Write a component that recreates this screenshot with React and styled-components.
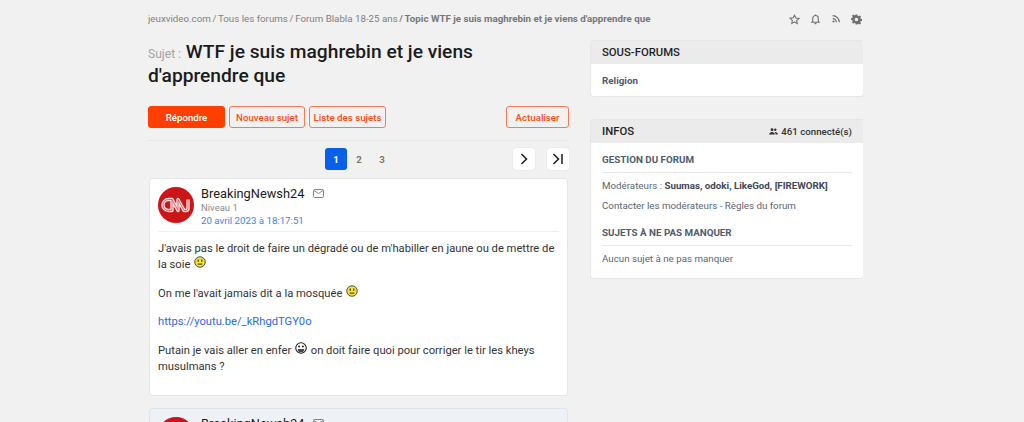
import React from "react";
import styled, { createGlobalStyle } from "styled-components";

const GlobalStyle = createGlobalStyle`
  html, body {
    margin: 0;
    height: 422px;
    overflow: hidden;
    background: #f1f1f1;
    font-family: Roboto, "Liberation Sans", sans-serif;
  }
`;

const Page = styled.div`
  width: 715px;
  margin-left: 148px;
  height: 422px;
  overflow: hidden;
`;
const TopBar = styled.div`
  display: flex;
  justify-content: space-between;
  align-items: center;
  height: 18px;
  padding-top: 9px;
  margin-bottom: 13px;
`;
const Breadcrumb = styled.div`
  font-size: 9.75px;
  color: #808080;
  white-space: nowrap;
`;
const Crumb = styled.span`
  font-weight: ${(p) => (p.$current ? 700 : 400)};
  color: ${(p) => (p.$current ? "#777" : "#808080")};
`;
const Sep = styled.span`
  margin: 0 -0.8px;
  font-weight: ${(p) => (p.$current ? 700 : 400)};
`;
const TopIcons = styled.div`
  display: flex;
  align-items: center;
  gap: 10px;
  padding: 2px 1px 0 0;
  color: #6f6f6f;
`;
const Columns = styled.div`
  display: grid;
  grid-template-columns: 421px 272px;
  column-gap: 22px;
  align-items: start;
`;
const MainCol = styled.main``;
const SideCol = styled.aside`
  display: flex;
  flex-direction: column;
  gap: 24px;
  padding-top: 1px;
`;
const Title = styled.h1`
  margin: 0 0 18px;
  font-size: 19.2px;
  line-height: 24px;
  font-weight: 500;
  color: #1b1b1b;
`;
const TitleLabel = styled.span`
  font-size: 12.1px;
  line-height: 1;
  font-weight: 400;
  color: #a3a3a3;
`;
const Actions = styled.div`
  display: flex;
  gap: 4px;
  padding-bottom: 12px;
  border-bottom: 1px solid #e6e6e6;
`;
const Button = styled.button`
  height: 22px;
  width: ${(p) => p.$w}px;
  padding: 0;
  border-radius: 3px;
  border: 1px solid ${(p) => (p.$primary ? "#ff3f00" : "#f57a55")};
  background: ${(p) => (p.$primary ? "#ff3f00" : "transparent")};
  color: ${(p) => (p.$primary ? "#fff" : "#ff4b12")};
  font: 500 9.7px Roboto, sans-serif;
  white-space: nowrap;
  margin-left: ${(p) => (p.$push ? "auto" : "0")};
`;
const Pager = styled.div`
  display: flex;
  height: 22px;
  margin: 7px 0 8px;
  padding-left: 177px;
`;
const PageNum = styled.div`
  width: 22px;
  height: 22px;
  margin-right: 1px;
  border-radius: 3px;
  display: flex;
  align-items: center;
  justify-content: center;
  font-size: 9.7px;
  font-weight: 700;
  background: ${(p) => (p.$active ? "#0760e8" : "transparent")};
  color: ${(p) => (p.$active ? "#fff" : "#777")};
`;
const PagerRight = styled.div`
  margin-left: auto;
  display: flex;
  gap: 12px;
`;
const PagerBtn = styled.div`
  width: 22px;
  height: 22px;
  border-radius: 3px;
  background: #fff;
  box-shadow: 0 0 1px rgba(0, 0, 0, 0.2);
  display: flex;
  align-items: center;
  justify-content: center;
  color: #1b1b1b;
`;
const Post = styled.article`
  box-sizing: border-box;
  margin: 0 1px 12px;
  padding: 8px 8px 0;
  border-radius: 3px;
  background: ${(p) => (p.$alt ? "#eef2f7" : "#fff")};
  border: 1px solid ${(p) => (p.$alt ? "#dfe5ee" : "#e6e6e6")};
  min-height: ${(p) => (p.$alt ? "100px" : "218px")};
`;
const PostHead = styled.div`
  box-sizing: border-box;
  display: flex;
  gap: 7px;
  border-bottom: 1px solid #f0f0f0;
  height: 45px;
`;
const Author = styled.div`
  display: flex;
  flex-direction: column;
`;
const AuthorName = styled.div`
  display: flex;
  align-items: center;
  gap: 9px;
  font-size: 12.8px;
  line-height: 13px;
  font-weight: 400;
  color: #1b1b1b;
`;
const Mail = styled.span`
  display: flex;
  color: #808080;
`;
const Level = styled.div`
  font-size: 9.5px;
  line-height: 13px;
  margin-top: 1px;
  color: #8b8b8b;
`;
const PostDate = styled.div`
  font-size: 9.7px;
  line-height: 13px;
  color: #3f7fe8;
`;
const PostBody = styled.div`
  padding-top: 8.5px;
  font-size: 11.2px;
  line-height: 16.5px;
  color: #333;
`;
const Para = styled.p`
  margin: 0 0 12px;
`;
const LinkText = styled.a`
  color: #2c68e8;
  text-decoration: none;
`;
const Smiley = styled.svg`
  vertical-align: 0;
  margin: -3px 1px 0;
`;
const Card = styled.section`
  background: #fff;
  border-radius: 3px;
  box-shadow: 0 0 0 1px #e6e6e6;
  overflow: hidden;
`;
const CardHead = styled.header`
  display: flex;
  justify-content: space-between;
  align-items: center;
  height: 23px;
  padding: 0 11px;
  background: #ebebeb;
`;
const CardTitle = styled.h2`
  margin: 0;
  font-size: 11.3px;
  font-weight: 500;
  color: #1f1f1f;
`;
const Online = styled.div`
  display: flex;
  align-items: center;
  gap: 3px;
  font-size: 9.7px;
  font-weight: 500;
  color: #333;
`;
const CardBody = styled.div`
  padding: ${(p) => p.$pad};
  font-size: 9.75px;
  color: #5c6470;
`;
const SubLink = styled.div`
  font-weight: 700;
  font-size: 9.8px;
  color: #4f5b6b;
  line-height: 13px;
`;
const SectionTitle = styled.h3`
  margin: 0 0 6px;
  padding-bottom: 6px;
  border-bottom: 1px solid #e8e8e8;
  font-size: 9.8px;
  line-height: 13px;
  font-weight: 700;
  color: #4f5b6b;
`;
const InfoLine = styled.div`
  line-height: 13px;
  margin-bottom: ${(p) => p.$mb}px;
`;
const Strong = styled.strong`
  color: #3f4855;
`;

function CnnLogo() {
  const letters = "M14.500 12.500H10.500A5.500 5.500 0 0 0 10.500 23.500H14V12.500L20 23.500V12.500L26 23.500H28A2 2 0 0 0 30 21.500V12.500";
  return (
    <svg width="36" height="36" viewBox="0 0 36 36" style={{ flexShrink: 0 }}>
      <circle cx="18" cy="18" r="18" fill="#cc1518" />
      <g fill="none" strokeLinejoin="round">
        <path d={letters} stroke="#f8e4e4" strokeWidth="3.400" />
        <path d={letters} stroke="#d2494b" strokeWidth="0.800" />
      </g>
    </svg>
  );
}

function Face({ kind }) {
  if (kind === "grin") {
    return (
      <Smiley width="12" height="12" viewBox="0 0 13 13">
        <circle cx="6.500" cy="6.500" r="5.700" fill="#fff" stroke="#222" strokeWidth="1.200" />
        <circle cx="4.500" cy="4.800" r="1.100" fill="#222" />
        <circle cx="8.500" cy="4.800" r="1.100" fill="#222" />
        <path d="M3 7.500h7a3.500 3.500 0 0 1-7 0z" fill="#444" />
      </Smiley>
    );
  }
  return (
    <Smiley width="12" height="12" viewBox="0 0 13 13">
      <circle cx="6.500" cy="6.500" r="5.700" fill="#f6e13a" stroke="#333" strokeWidth="0.900" />
      <rect x="4" y="3.800" width="1.200" height="2.400" fill="#222" />
      <rect x="7.800" y="3.800" width="1.200" height="2.400" fill="#222" />
      <path d="M4 8.800h5" stroke="#222" strokeWidth="1" />
    </Smiley>
  );
}

function PostHeader() {
  return (
    <PostHead>
      <CnnLogo />
      <Author>
        <AuthorName>
          BreakingNewsh24
          <Mail>
            <svg width="11" height="9" viewBox="0 0 11 9" fill="none" stroke="currentColor" strokeWidth="1">
              <rect x="0.500" y="0.500" width="10" height="8" rx="1" />
              <path d="M1 1.500l4.500 3 4.500-3" />
            </svg>
          </Mail>
        </AuthorName>
        <Level>Niveau 1</Level>
        <PostDate>20 avril 2023 à 18:17:51</PostDate>
      </Author>
    </PostHead>
  );
}

export default function App() {
  return (
    <>
      <GlobalStyle />
      <Page>
        <TopBar>
          <Breadcrumb>
            <Crumb>jeuxvideo.com</Crumb> <Sep>/</Sep> <Crumb>Tous les forums</Crumb> <Sep>/</Sep>{" "}
            <Crumb>Forum Blabla 18-25 ans</Crumb> <Sep $current>/</Sep>{" "}
            <Crumb $current>Topic WTF je suis maghrebin et je viens d'apprendre que</Crumb>
          </Breadcrumb>
          <TopIcons>
            <svg width="11" height="11" viewBox="0 0 24 24" fill="none" stroke="currentColor" strokeWidth="2.200">
              <path d="M12 2.500l2.900 6.300 6.900.8-5.100 4.700 1.400 6.800L12 17.200l-6.100 3.400 1.400-6.800-5.100-4.700 6.900-.8z" />
            </svg>
            <svg width="11" height="12" viewBox="0 0 24 24" fill="none" stroke="currentColor" strokeWidth="2.400">
              <path d="M6 17V10.500a6 6 0 0 1 12 0V17l2 2H4z" />
              <path d="M10 22h4M12 2v2" />
            </svg>
            <svg width="10" height="10" viewBox="0 0 24 24" fill="none" stroke="currentColor" strokeWidth="3">
              <path d="M4 4a16 16 0 0 1 16 16M4 11a9 9 0 0 1 9 9" />
              <circle cx="6" cy="18" r="2.600" fill="currentColor" stroke="none" />
            </svg>
            <svg width="11" height="11" viewBox="0 0 24 24" fill="currentColor">
              <path
                fillRule="evenodd"
                d="M10 1h4l.6 3.200 1.800.8L19.100 3l2.900 2.900-1.900 2.700.8 1.800 3.100.6v4l-3.100.6-.8 1.800 1.900 2.700-2.900 2.900-2.700-2-1.800.8L14 23h-4l-.6-3.200-1.800-.8-2.700 2L2 18.100l1.900-2.700-.8-1.800L0 13V9l3.100-.6.800-1.800L2 3.900 4.900 1l2.700 2 1.800-.8zM12 8a4 4 0 1 0 0 8 4 4 0 0 0 0-8z"
              />
            </svg>
          </TopIcons>
        </TopBar>
        <Columns>
          <MainCol>
            <Title>
              <TitleLabel>Sujet :</TitleLabel> WTF je suis maghrebin et je viens d'apprendre que
            </Title>
            <Actions>
              <Button $primary $w={77}>Répondre</Button>
              <Button $w={76}>Nouveau sujet</Button>
              <Button $w={77}>Liste des sujets</Button>
              <Button $push $w={63}>Actualiser</Button>
            </Actions>
            <Pager>
              <PageNum $active>1</PageNum>
              <PageNum>2</PageNum>
              <PageNum>3</PageNum>
              <PagerRight>
                <PagerBtn>
                  <svg width="12" height="12" viewBox="0 0 12 12" fill="none" stroke="currentColor" strokeWidth="1.500">
                    <path d="M3.500 1l5 5-5 5" />
                  </svg>
                </PagerBtn>
                <PagerBtn>
                  <svg width="12" height="12" viewBox="0 0 12 12" fill="none" stroke="currentColor" strokeWidth="1.500">
                    <path d="M1.500 1l5 5-5 5M10 1v10" />
                  </svg>
                </PagerBtn>
              </PagerRight>
            </Pager>
            <Post>
              <PostHeader />
              <PostBody>
                <Para>
                  J'avais pas le droit de faire un dégradé ou de m'habiller en jaune ou de mettre de la soie <Face />
                </Para>
                <Para>
                  On me l'avait jamais dit a la mosquée <Face />
                </Para>
                <Para>
                  <LinkText href="#">https://youtu.be/_kRhgdTGY0o</LinkText>
                </Para>
                <Para>
                  Putain je vais aller en enfer <Face kind="grin" /> on doit faire quoi pour corriger le tir les kheys
                  musulmans ?
                </Para>
              </PostBody>
            </Post>
            <Post $alt>
              <PostHeader />
            </Post>
          </MainCol>
          <SideCol>
            <Card>
              <CardHead>
                <CardTitle>SOUS-FORUMS</CardTitle>
              </CardHead>
              <CardBody $pad="9.5px 11px">
                <SubLink>Religion</SubLink>
              </CardBody>
            </Card>
            <Card>
              <CardHead>
                <CardTitle>INFOS</CardTitle>
                <Online>
                  <svg width="9" height="7" viewBox="0 0 10 8" fill="currentColor">
                    <circle cx="3.300" cy="2" r="1.600" />
                    <circle cx="7" cy="2" r="1.400" />
                    <path d="M0 7.500C0 5.500 1.500 4.500 3.300 4.500S6.500 5.500 6.500 7.500zM7.300 7.500C7.300 6 7 5.200 6.300 4.600 8.300 4.200 10 5.500 10 7.500z" />
                  </svg>
                  461 connecté(s)
                </Online>
              </CardHead>
              <CardBody $pad="10px 11px 13px">
                <SectionTitle>GESTION DU FORUM</SectionTitle>
                <InfoLine $mb={6.500}>
                  Modérateurs : <Strong>Suumas, odoki, LikeGod, [FIREWORK]</Strong>
                </InfoLine>
                <InfoLine $mb={14.500}>Contacter les modérateurs - Règles du forum</InfoLine>
                <SectionTitle>SUJETS À NE PAS MANQUER</SectionTitle>
                <InfoLine $mb={0}>Aucun sujet à ne pas manquer</InfoLine>
              </CardBody>
            </Card>
          </SideCol>
        </Columns>
      </Page>
    </>
  );
}
